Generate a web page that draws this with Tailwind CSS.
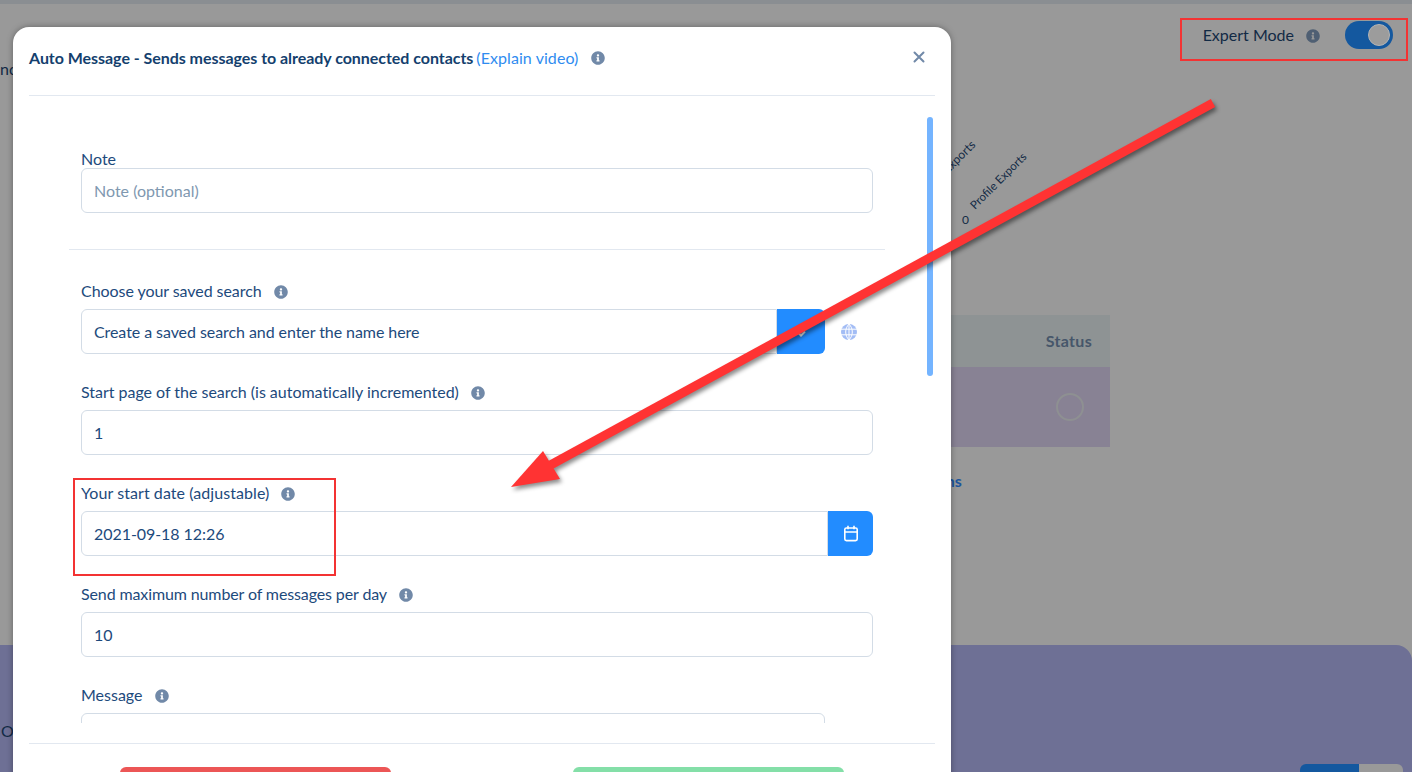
<!DOCTYPE html>
<html lang="en">
<head>
    <meta charset="UTF-8">
    <title>Auto Message</title>
    <script src="https://cdn.jsdelivr.net/npm/@tailwindcss/browser@4"></script>
</head>
<body class="font-['Lato','Liberation_Sans',sans-serif] overflow-hidden bg-[#999999]">
    <svg class="absolute w-0 h-0">
        <symbol id="info" viewBox="0 0 512 512"><path fill="currentColor" d="M256 8C119 8 8 119 8 256s111 248 248 248 248-111 248-248S393 8 256 8zm0 110c23.2 0 42 18.8 42 42s-18.8 42-42 42-42-18.8-42-42 18.8-42 42-42zm56 254c0 6.6-5.4 12-12 12h-88c-6.6 0-12-5.4-12-12v-24c0-6.6 5.4-12 12-12h12v-64h-12c-6.6 0-12-5.4-12-12v-24c0-6.6 5.4-12 12-12h64c6.6 0 12 5.4 12 12v100h12c6.6 0 12 5.4 12 12v24z"/></symbol>
    </svg>

    <div class="relative w-[1412px] h-[772px] overflow-hidden flex flex-col">
        <!-- Dimmed page behind the modal -->
        <div class="h-[4px] bg-[#8a8e92]"></div>
        <div class="h-[641px] relative flex flex-col">
            <div class="flex justify-end items-center pt-[17px] pr-[19px] h-[45px]">
                <span class="text-[16px] text-[#122a45]">Expert Mode</span>
                <svg class="w-[14px] h-[14px] ml-[12px] mt-[1px] text-[#4f5f73]"><use href="#info"/></svg>
                <div class="ml-[25px] w-[48px] h-[28px] rounded-full bg-[#14589f] flex items-center justify-end pr-[3px]">
                    <div class="w-[22px] h-[22px] rounded-full bg-[#9c9c9c] border border-[#b4b4b4]"></div>
                </div>
            </div>
            <span class="absolute left-0 top-[53px] text-[16px] text-[#122a45]">nc</span>
            <span class="absolute left-[939px] top-[144px] text-[12px] text-[#122a45] -rotate-45">Exports</span>
            <span class="absolute left-[961px] top-[168px] text-[11.5px] text-[#122a45] -rotate-45">Profile Exports</span>
            <span class="absolute left-[962px] top-[207px] text-[12px] text-[#122a45]">0</span>
            <!-- Table -->
            <div class="absolute left-[800px] top-[311px] w-[310px]">
                <div class="h-[52px] bg-[#8e9394] flex items-center justify-end pr-[18px] text-[16px] font-bold tracking-[0.3px] text-[#46566a]">Status</div>
                <div class="h-[80px] bg-[#888294] flex items-center justify-end pr-[26px]">
                    <div class="w-[28px] h-[28px] rounded-full border-[2px] border-[#8e9092]"></div>
                </div>
                <div class="mt-[22px] pl-[84px] text-[16px] font-bold text-[#1c559d]">Campaigns</div>
            </div>
        </div>
        <div class="flex-1 bg-[#6e7095] rounded-tr-2xl relative">
            <span class="absolute left-[1px] top-[74px] text-[16px] text-[#122a45]">O</span>
            <div class="absolute left-[1300px] top-[119px] w-[103px] h-[20px] flex rounded-t-md overflow-hidden">
                <div class="w-[59px] bg-[#14589f]"></div>
                <div class="flex-1 bg-[#999999]"></div>
            </div>
        </div>

        <!-- Modal -->
        <div class="absolute left-[13px] top-[27px] w-[938px] h-[800px] bg-white rounded-2xl shadow-[0_0_6px_rgba(0,0,0,0.35)] flex flex-col">
            <div class="mx-4 h-[69px] shrink-0 border-b border-[#e2e8f0] flex items-center pb-[7px]">
                <span class="text-[16px] font-bold text-[#143f6e] tracking-[-0.04px]">Auto Message - Sends messages to already connected contacts</span>
                <span class="ml-[3px] text-[16px] text-[#2f8cf0] tracking-[0.07px]">(Explain video)</span>
                <svg class="w-[14px] h-[14px] ml-[13px] text-[#7189a8]"><use href="#info"/></svg>
                <svg class="ml-auto mr-[10px] mb-[2px] w-[12px] h-[12px] text-[#7189a8]" viewBox="0 0 12 12"><path d="M1.5 1.5l9 9M10.5 1.5l-9 9" stroke="currentColor" stroke-width="2" stroke-linecap="round"/></svg>
            </div>

            <div class="relative mx-4 h-[627px] shrink-0 overflow-hidden pl-[52px] text-[16px] text-[#1d4a7c]">
                <div class="absolute right-[2px] top-[21px] w-[6px] h-[259px] rounded-full bg-[#74b4ff]"></div>
                <div class="w-[792px]">
                    <div class="pt-[54px] h-[72px] leading-[18px]">Note</div>
                    <div class="h-[45px] border border-[#d3dce6] rounded-md px-3 flex items-center text-[#8098b0]">Note (optional)</div>
                    <div class="-mx-3 w-[816px] mt-[36px] border-t border-[#e2e8f0]"></div>

                    <div class="mt-[30px] mb-[7px] h-[22px] flex items-center tracking-[-0.06px]">Choose your saved search
                        <svg class="w-[14px] h-[14px] ml-[12px] mt-[2px] text-[#7189a8]"><use href="#info"/></svg>
                    </div>
                    <div class="flex items-center">
                        <div class="w-[696px] h-[45px] border border-[#d3dce6] rounded-l-md px-3 flex items-center tracking-[-0.07px]">Create a saved search and enter the name here</div>
                        <div class="w-[48px] h-[45px] bg-[#228cff] rounded-r-md flex items-center justify-center">
                            <svg class="w-[12px] h-[12px] mt-[2px] text-white" viewBox="0 0 12 12"><path d="M2 4.5l4 4 4-4" fill="none" stroke="currentColor" stroke-width="2"/></svg>
                        </div>
                        <svg class="ml-[15px] w-[18px] h-[18px]" viewBox="0 0 18 18"><circle cx="9" cy="9" r="8" fill="#a3bdf5"/><path d="M1 6.2h16M1 11.8h16M9 1v16M9 1c-4.4 4.6-4.4 11.4 0 16M9 1c4.4 4.6 4.4 11.4 0 16" fill="none" stroke="#fff" stroke-width="1"/></svg>
                    </div>

                    <div class="mt-[27px] mb-[7px] h-[22px] flex items-center tracking-[-0.02px]">Start page of the search (is automatically incremented)
                        <svg class="w-[14px] h-[14px] ml-[12px] mt-[2px] text-[#7189a8]"><use href="#info"/></svg>
                    </div>
                    <div class="h-[45px] border border-[#d3dce6] rounded-md px-3 flex items-center">1</div>

                    <div class="mt-[27px] mb-[7px] h-[22px] flex items-center tracking-[0.07px]">Your start date (adjustable)
                        <svg class="w-[14px] h-[14px] ml-[12px] mt-[2px] text-[#7189a8]"><use href="#info"/></svg>
                    </div>
                    <div class="flex">
                        <div class="flex-1 h-[45px] border border-[#d3dce6] rounded-l-md px-3 flex items-center tracking-[-0.06px]">2021-09-18 12:26</div>
                        <div class="w-[45px] h-[45px] bg-[#228cff] rounded-r-md flex items-center justify-center">
                            <svg class="w-[16px] h-[17px]" viewBox="0 0 16 17" fill="none" stroke="#fff" stroke-width="1.6"><rect x="1.8" y="3" width="12.4" height="12.6" rx="1.6"/><path d="M1.8 7h12.4M5 .8v3.4M11 .8v3.4"/></svg>
                        </div>
                    </div>

                    <div class="mt-[27px] mb-[7px] h-[22px] flex items-center tracking-[-0.12px]">Send maximum number of messages per day
                        <svg class="w-[14px] h-[14px] ml-[12px] mt-[2px] text-[#7189a8]"><use href="#info"/></svg>
                    </div>
                    <div class="h-[45px] border border-[#d3dce6] rounded-md px-3 flex items-center">10</div>

                    <div class="mt-[27px] mb-[7px] h-[22px] flex items-center">Message
                        <svg class="w-[14px] h-[14px] ml-[12px] mt-[2px] text-[#7189a8]"><use href="#info"/></svg>
                    </div>
                    <div class="w-[744px] h-[120px] border border-[#d3dce6] rounded-md"></div>
                </div>
            </div>

            <div class="mx-4 mt-[20px] border-t border-[#e2e8f0]"></div>
            <div class="pt-[23px] px-[107px] flex justify-between">
                <div class="w-[271px] h-[40px] rounded-md bg-[#ec5656]"></div>
                <div class="w-[271px] h-[40px] rounded-md bg-[#84dfa8]"></div>
            </div>
        </div>

        <!-- Annotations drawn on top of the screenshot -->
        <div class="absolute left-[1180px] top-[18px] w-[228px] h-[43px] border-2 border-[#f33333]"></div>
        <div class="absolute left-[73px] top-[478px] w-[263px] h-[98px] border-2 border-[#f33333]"></div>
        <svg class="absolute inset-0 w-[1412px] h-[772px] pointer-events-none drop-shadow-[2px_3px_2px_rgba(0,0,0,0.45)]" viewBox="0 0 1412 772">
            <path d="M1213 103L545 468" stroke="#ff3333" stroke-width="9" fill="none"/>
            <path d="M511 487L543 451L560 479Z" fill="#ff3333"/>
        </svg>
    </div>
</body>
</html>
